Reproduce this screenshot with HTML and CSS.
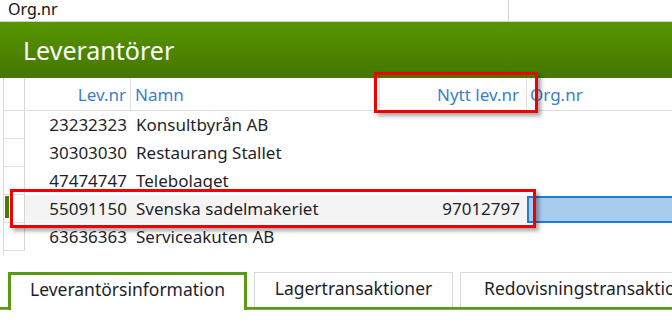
FILE: index.html
```html
<!DOCTYPE html>
<html>
<head>
<meta charset="utf-8">
<link rel="stylesheet" href="styles.css">
</head>
<body>
<div class="page">
  <div class="topbar">
    <div class="topcell">Org.nr</div>
    <div class="topcell rest"></div>
  </div>
  <div class="titlebar">Leverantörer</div>
  <div class="grid">
    <div class="row head">
      <div class="c rh"></div>
      <div class="c levnr">Lev.nr</div>
      <div class="c namn">Namn</div>
      <div class="c nytt">Nytt lev.nr</div>
      <div class="c org">Org.nr</div>
    </div>
    <div class="row">
      <div class="c rh"></div>
      <div class="c levnr">23232323</div>
      <div class="c namn">Konsultbyrån AB</div>
      <div class="c nytt"></div>
      <div class="c org"></div>
    </div>
    <div class="row">
      <div class="c rh"></div>
      <div class="c levnr">30303030</div>
      <div class="c namn">Restaurang Stallet</div>
      <div class="c nytt"></div>
      <div class="c org"></div>
    </div>
    <div class="row">
      <div class="c rh"></div>
      <div class="c levnr">47474747</div>
      <div class="c namn">Telebolaget</div>
      <div class="c nytt"></div>
      <div class="c org"></div>
    </div>
    <div class="row sel">
      <div class="c rh"><span class="marker"></span></div>
      <div class="c levnr">55091150</div>
      <div class="c namn">Svenska sadelmakeriet</div>
      <div class="c nytt">97012797</div>
      <div class="c org"><span class="edit"></span></div>
    </div>
    <div class="row last">
      <div class="c rh"></div>
      <div class="c levnr">63636363</div>
      <div class="c namn">Serviceakuten AB</div>
      <div class="c nytt"></div>
      <div class="c org"></div>
    </div>
  </div>
  <div class="tabs">
    <div class="tabgap"></div>
    <div class="tab active">Leverantörsinformation</div>
    <div class="tab t2">Lagertransaktioner</div>
    <div class="tab t3">Redovisningstransaktioner</div>
  </div>
  <div class="note note-head"></div>
  <div class="note note-row"></div>
</div>
</body>
</html>
```
FILE: styles.css
```css
html, body {
  margin: 0;
  padding: 0;
  background: #fff;
  overflow: hidden;
}
.page {
  position: relative;
  width: 672px;
  height: 328px;
  overflow: hidden;
  font-family: "Noto Sans", "Open Sans", sans-serif;
  color: #1f1f2b;
}
.topbar {
  display: flex;
  height: 21px;
  border-bottom: 1px solid #cfcfcf;
}
.topcell {
  width: 500px;
  padding-left: 8px;
  font-size: 16px;
  line-height: 18px;
  color: #111;
  border-right: 1px solid #d4d4d4;
  height: 21px;
}
.topcell.rest {
  flex: 1;
  border-right: none;
  padding: 0;
}
.titlebar {
  height: 56px;
  background: linear-gradient(#579500, #457600);
  color: #fff;
  font-size: 25px;
  line-height: 56px;
  padding-left: 23px;
  box-sizing: border-box;
}
.grid {
  margin-left: 3px;
  border-left: 1px solid #d6d6d6;
  height: 177px;
}
.row {
  display: flex;
  height: 28px;
  font-size: 17px;
  line-height: 28px;
}
.row.head {
  height: 32px;
  line-height: 33px;
  border-bottom: 1px solid #dcdcdc;
  color: #3a7fc8;
}
.c {
  white-space: nowrap;
  overflow: hidden;
  box-sizing: border-box;
}
.rh {
  width: 21px;
  border-right: 1px solid #d6d6d6;
  border-bottom: 1px solid #e2e2e2;
  position: relative;
}
.row.head .rh { border-bottom: none; }
.levnr {
  width: 106px;
  text-align: right;
  padding-right: 4px;
}
.namn {
  width: 249px;
  padding-left: 5px;
}
.nytt {
  width: 147px;
  text-align: right;
  padding-right: 7px;
}
.org {
  flex: 1;
  padding-left: 3px;
  position: relative;
}
.row.head .levnr,
.row.head .namn,
.row.head .nytt {
  border-right: 1px solid #e0e0e0;
}
.row.head .namn { padding-left: 4px; }
.row.sel .levnr,
.row.sel .namn,
.row.sel .nytt {
  background: #f4f4f4;
}
.marker {
  position: absolute;
  left: 1px;
  top: 1px;
  width: 4px;
  height: 22px;
  background: #4a7d00;
}
.edit {
  position: absolute;
  left: 0;
  top: 1px;
  right: -4px;
  height: 27px;
  box-sizing: border-box;
  border: 2px solid #1b7ed6;
  background: #a9cbee;
}
.tabs {
  display: flex;
  align-items: flex-end;
  margin-top: 16px;
  height: 36px;
  border-bottom: 2px solid #5a9a12;
  box-shadow: 0 1px 0 #7fb24a;
}
.tabgap {
  flex-shrink: 0;
  width: 8px;
  height: 36px;
}
.tab {
  flex-shrink: 0;
  height: 35px;
  box-sizing: border-box;
  border: 1px solid #d9d9d9;
  border-bottom: none;
  font-size: 17.5px;
  line-height: 30px;
  color: #1e1e2a;
  white-space: nowrap;
  margin-right: 7px;
}
.tab.active {
  width: 239px;
  height: 38px;
  margin-bottom: -3px;
  border: 3px solid #5a9a12;
  border-bottom: none;
  background: #fff;
  text-align: center;
  line-height: 29px;
}
.tab.t2 {
  width: 199px;
  text-align: center;
}
.tab.t3 {
  width: 260px;
  padding-left: 23px;
}
.note {
  position: absolute;
  border: 3px solid #f00000;
  box-shadow: 3px 3px 4px rgba(0, 0, 0, 0.35);
  box-sizing: border-box;
}
.note-head {
  left: 374px;
  top: 72px;
  width: 164px;
  height: 41px;
}
.note-row {
  left: 10px;
  top: 189px;
  width: 526px;
  height: 39px;
}
```
